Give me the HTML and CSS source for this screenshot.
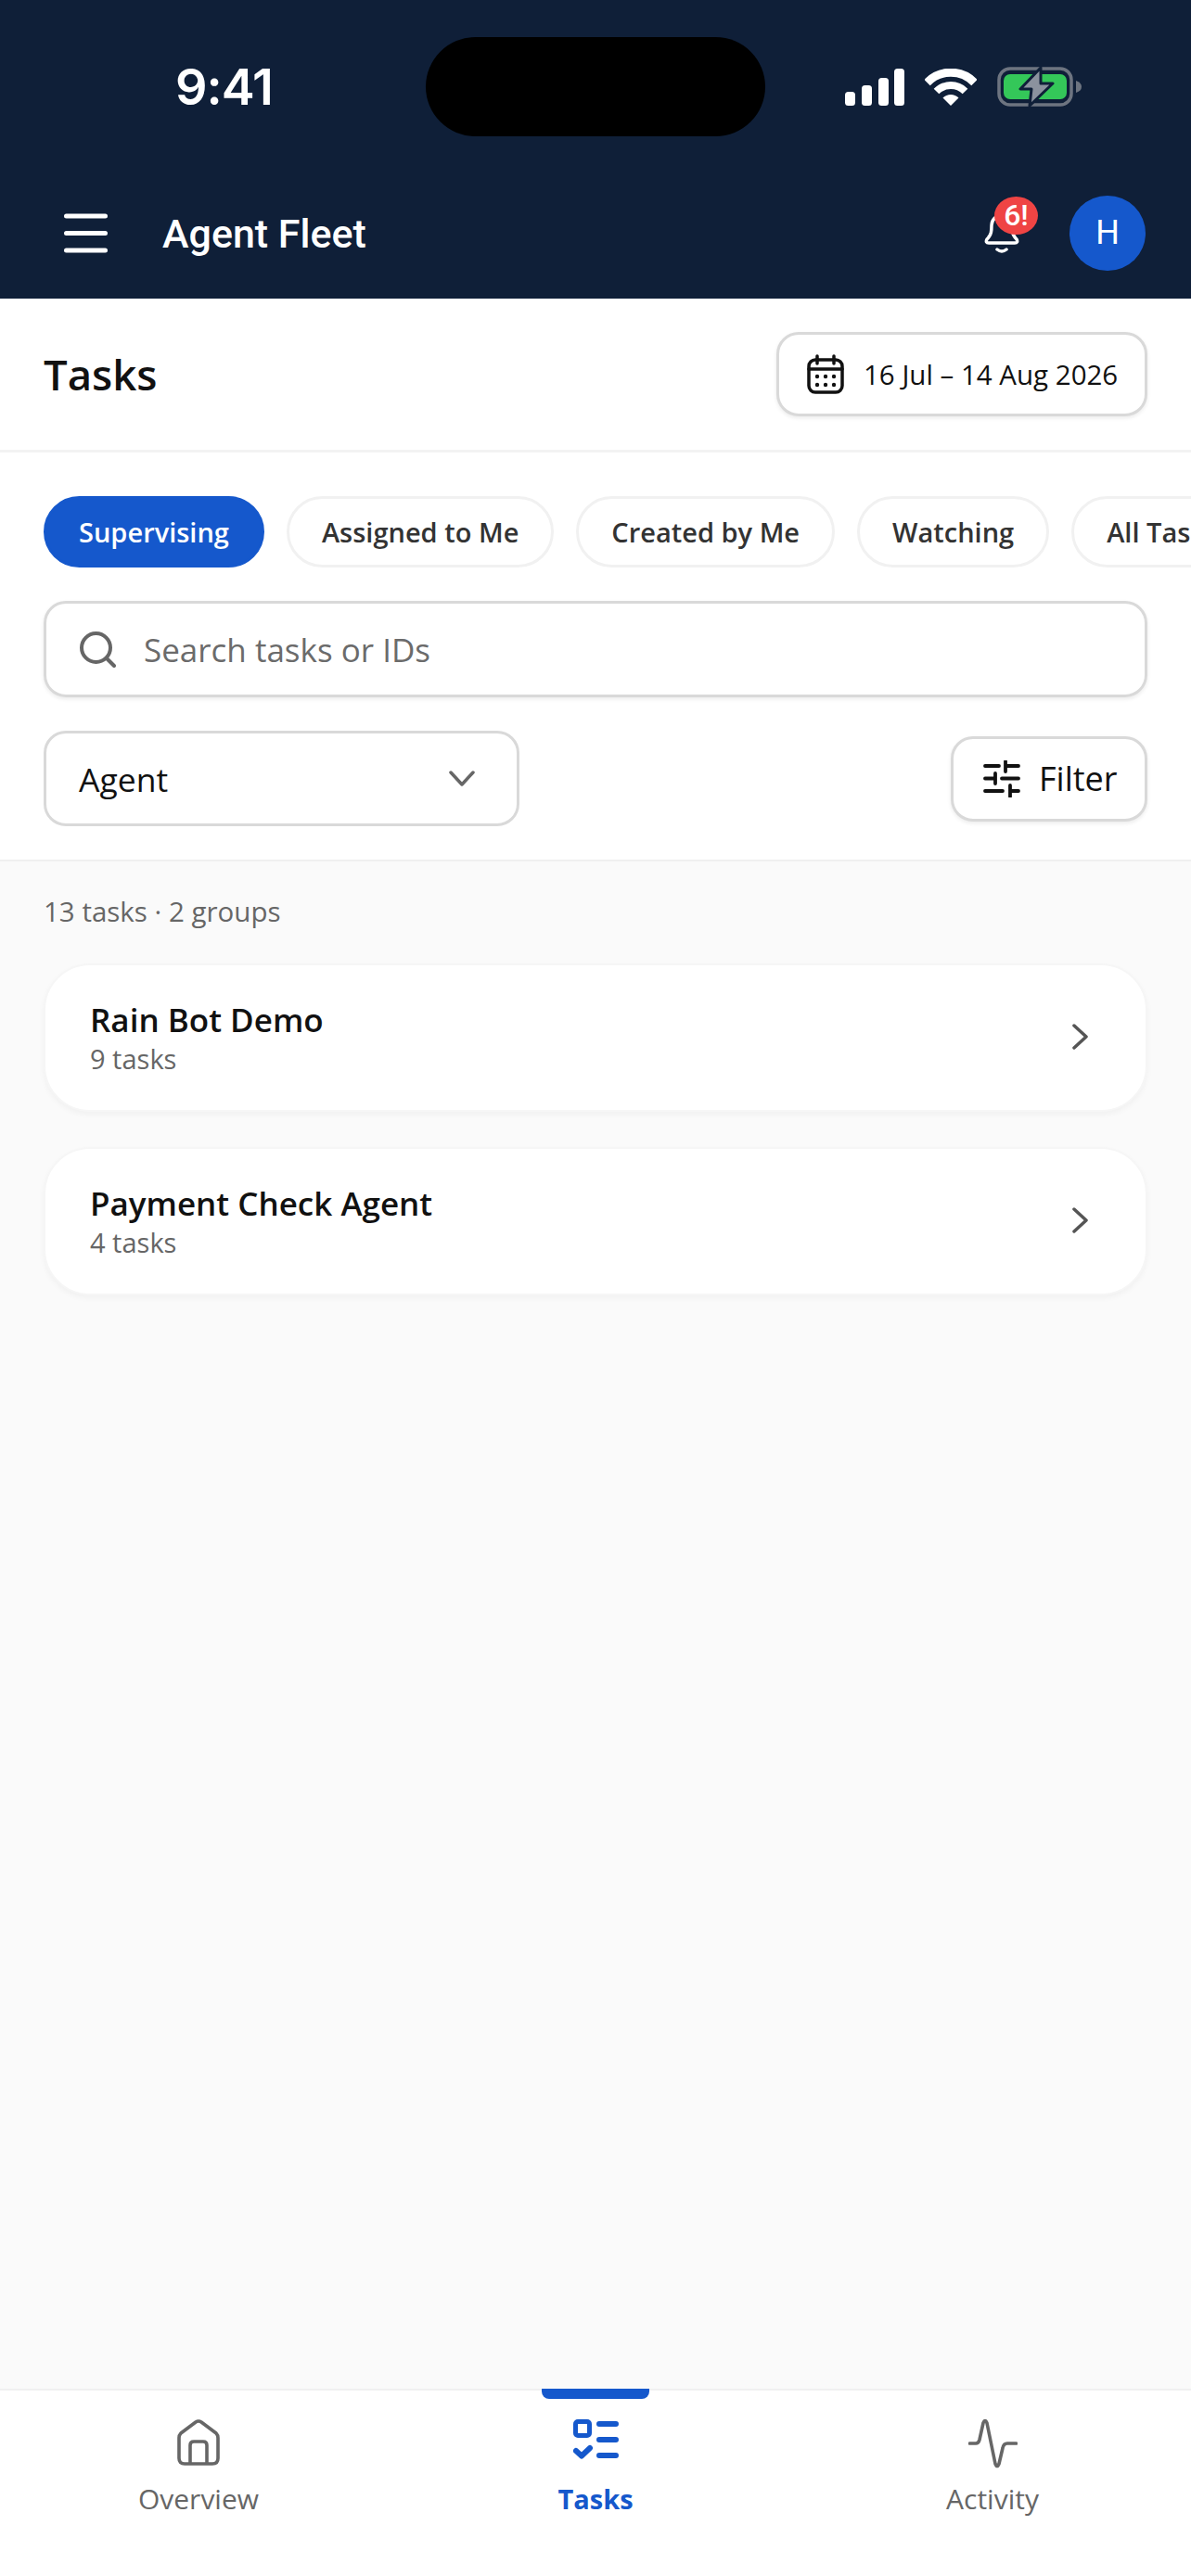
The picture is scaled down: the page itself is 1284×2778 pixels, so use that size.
FILE: index.html
```html
<!DOCTYPE html>
<html lang="en">
<head>
  <meta charset="UTF-8">
  <meta name="viewport" content="width=device-width, initial-scale=1.0">
  <title>Agent Fleet - Tasks</title>
  <link rel="stylesheet" href="styles.css">
</head>
<body>

  <header class="top-header">
    <div class="status-bar">
      <div class="status-time">9:41</div>
      <div class="island"></div>
      <div class="status-icons">
        <svg class="ic-signal" viewBox="0 0 64 40">
          <rect x="0" y="25" width="11" height="15" rx="3.5"/>
          <rect x="18" y="18" width="11" height="22" rx="3.5"/>
          <rect x="36" y="10" width="11" height="30" rx="3.5"/>
          <rect x="53" y="0" width="11" height="40" rx="3.5"/>
        </svg>
        <svg class="ic-wifi" viewBox="0 0 56 40">
          <path d="M2.5 15A35.5 35.5 0 0 1 53.5 15" fill="none" stroke="#fff" stroke-width="9"/>
          <path d="M12.5 24.5A22 22 0 0 1 43.5 24.5" fill="none" stroke="#fff" stroke-width="8"/>
          <path d="M28 40L19.5 31.5A12 12 0 0 1 36.5 31.5Z" fill="#fff"/>
        </svg>
        <svg class="ic-battery" viewBox="0 0 91 43">
          <rect x="2" y="2" width="78" height="39" rx="12" fill="none" stroke="#6d7480" stroke-width="3.5"/>
          <rect x="7" y="8" width="68" height="27" rx="7" fill="#34c759"/>
          <path d="M85 15Q91 17 91 21.5Q91 26 85 28Z" fill="#6d7480"/>
          <path d="M47 1L25 24H37L35 42L60 18H47Z" fill="#8b929e" stroke="#0f1f38" stroke-width="3" stroke-linejoin="round"/>
        </svg>
      </div>
    </div>

    <div class="app-bar">
      <svg class="ic-menu" viewBox="0 0 47 43" fill="none" stroke="#fff" stroke-width="5" stroke-linecap="round">
        <path d="M2.5 3H44.5M2.5 21.5H44.5M2.5 40H44.5"/>
      </svg>
      <div class="app-title">Agent Fleet</div>
      <div class="bell">
        <svg class="ic-bell" viewBox="0 0 40 44" fill="none" stroke="#fff" stroke-width="3.5" stroke-linecap="round" stroke-linejoin="round">
          <path d="M4 27C9 22 9 18 9 12A11 11 0 0 1 31 12C31 18 31 22 36 27Q38 31 34 31H6Q2 31 4 27Z"/>
          <path d="M15 38Q20 42 25 38"/>
        </svg>
        <span class="badge">6!</span>
      </div>
      <div class="avatar">H</div>
    </div>
  </header>

  <section class="title-row">
    <h1>Tasks</h1>
    <button class="date-btn">
      <svg class="ic-calendar" viewBox="0 0 40 43" fill="none" stroke="#111" stroke-width="3.5" stroke-linecap="round">
        <rect x="2" y="6" width="36" height="35" rx="7"/>
        <path d="M2 16H38M11 2V10M29 2V10"/>
        <g fill="#111" stroke="none">
          <circle cx="11" cy="24" r="2.2"/><circle cx="20" cy="24" r="2.2"/><circle cx="29" cy="24" r="2.2"/>
          <circle cx="11" cy="33" r="2.2"/><circle cx="20" cy="33" r="2.2"/><circle cx="29" cy="33" r="2.2"/>
        </g>
      </svg>
      16 Jul – 14 Aug 2026
    </button>
  </section>

  <section class="controls">
    <div class="pills">
      <div class="pill active">Supervising</div>
      <div class="pill">Assigned to Me</div>
      <div class="pill">Created by Me</div>
      <div class="pill">Watching</div>
      <div class="pill">All Tasks</div>
    </div>

    <div class="search-box">
      <svg class="ic-search" viewBox="0 0 39 39" fill="none" stroke="#666" stroke-width="4" stroke-linecap="round">
        <circle cx="17.5" cy="17.5" r="15.5"/>
        <path d="M29 29L37 37"/>
      </svg>
      <span>Search tasks or IDs</span>
    </div>

    <div class="filter-row">
      <div class="agent-select">
        <span>Agent</span>
        <svg class="ic-down" viewBox="0 0 28 17" fill="none" stroke="#666" stroke-width="3.5" stroke-linecap="round" stroke-linejoin="round">
          <path d="M2 2L14 15L26 2"/>
        </svg>
      </div>
      <button class="filter-btn">
        <svg class="ic-filter" viewBox="0 0 40 40" fill="none" stroke="#111" stroke-width="3.8" stroke-linecap="round">
          <path d="M2 6H17M24 1V12M24 6H38M2 19.5H12M13 14V25M20 19.5H38M2 33H21M29 27V39M29 33H38"/>
        </svg>
        Filter
      </button>
    </div>
  </section>

  <main class="content">
    <div class="summary">13 tasks · 2 groups</div>

    <div class="group-card">
      <div>
        <div class="group-name">Rain Bot Demo</div>
        <div class="group-count">9 tasks</div>
      </div>
      <svg class="ic-right" viewBox="0 0 19 28" fill="none" stroke="#555" stroke-width="3.5" stroke-linecap="round" stroke-linejoin="round">
        <path d="M3 2L16 14L3 26"/>
      </svg>
    </div>

    <div class="group-card">
      <div>
        <div class="group-name">Payment Check Agent</div>
        <div class="group-count">4 tasks</div>
      </div>
      <svg class="ic-right" viewBox="0 0 19 28" fill="none" stroke="#555" stroke-width="3.5" stroke-linecap="round" stroke-linejoin="round">
        <path d="M3 2L16 14L3 26"/>
      </svg>
    </div>
  </main>

  <nav class="bottom-nav">
    <div class="nav-item">
      <svg class="ic-home" viewBox="0 0 48 50" fill="none" stroke="#666" stroke-width="3.6" stroke-linejoin="round">
        <path d="M3 20Q3 17 5 15L21 3Q24 1 27 3L43 15Q45 17 45 20V42Q45 48 39 48H9Q3 48 3 42Z"/>
        <path d="M15 48V28Q15 24 19 24H29Q33 24 33 28V48"/>
      </svg>
      <span>Overview</span>
    </div>
    <div class="nav-item active">
      <svg class="ic-tasks" viewBox="0 0 49 44" fill="none" stroke="#1558cc" stroke-linecap="round" stroke-linejoin="round">
        <rect x="2.5" y="2.5" width="15" height="15" rx="2.5" stroke-width="5"/>
        <path d="M28 5H46M28 22H46M28 39H46" stroke-width="6"/>
        <path d="M3 34L9 39.5L18 31" stroke-width="6"/>
      </svg>
      <span>Tasks</span>
    </div>
    <div class="nav-item">
      <svg class="ic-activity" viewBox="0 0 53 53" fill="none" stroke="#666" stroke-width="3.6" stroke-linecap="round" stroke-linejoin="round">
        <path d="M1.5 26H8Q11 26 12 22L16 4Q18 -1 20 4L29 48Q31 53 33 48L37 31Q38 26 42 26H51.5"/>
      </svg>
      <span>Activity</span>
    </div>
  </nav>

</body>
</html>
```

FILE: styles.css
```css
* {
  box-sizing: border-box;
}

body {
  margin: 0;
  width: 1284px;
  height: 2778px;
  display: flex;
  flex-direction: column;
  overflow: hidden;
  font-family: 'Open Sans', sans-serif;
  color: #111;
  background-color: #fff;
}

button {
  font-family: inherit;
  color: inherit;
  background-color: #fff;
}

svg {
  display: block;
  flex-shrink: 0;
}

/* Header */
.top-header {
  height: 322px;
  background-color: #0f1f38;
  color: #fff;
  font-family: Roboto, sans-serif;
}

.status-bar {
  display: grid;
  grid-template-columns: 459px 366px 1fr;
  padding-top: 40px;
  height: 147px;
}

.status-time {
  padding-left: 189px;
  font-family: Inter, sans-serif;
  font-size: 54px;
  font-weight: 600;
  line-height: 107px;
  letter-spacing: -1px;
}

.island {
  background-color: #000;
  border-radius: 54px;
}

.status-icons {
  display: flex;
  align-items: center;
  gap: 22px;
  padding-left: 86px;
  fill: #fff;
}

.ic-signal {
  width: 64px;
  height: 40px;
}

.ic-wifi {
  width: 56px;
  height: 40px;
}

.ic-battery {
  width: 91px;
  height: 43px;
}

.app-bar {
  display: flex;
  align-items: center;
  height: 81px;
  margin-top: 64px;
  padding: 0 49px 0 69px;
}

.ic-menu {
  width: 47px;
  height: 43px;
}

.app-title {
  margin-left: 59px;
  font-size: 43px;
  font-weight: 500;
  flex: 1;
}

.bell {
  position: relative;
  width: 40px;
  height: 44px;
  margin-top: 2px;
  margin-right: 53px;
}

.ic-bell {
  width: 40px;
  height: 44px;
}

.badge {
  position: absolute;
  top: -19px;
  left: 12px;
  width: 47px;
  height: 41px;
  border-radius: 50%;
  background-color: #ef4444;
  font-size: 32px;
  line-height: 41px;
  text-align: center;
  font-weight: 500;
}

.avatar {
  width: 82px;
  height: 81px;
  border-radius: 50%;
  background-color: #1558cc;
  font-size: 36px;
  line-height: 81px;
  text-align: center;
}

/* Title row */
.title-row {
  display: flex;
  align-items: center;
  justify-content: space-between;
  height: 166px;
  padding: 0 47px;
  border-bottom: 3px solid #f3f3f3;
}

h1 {
  margin: 0 0 2px;
  font-size: 45.5px;
  font-weight: 600;
}

.date-btn {
  display: flex;
  align-items: center;
  gap: 21px;
  width: 400px;
  height: 91px;
  padding: 0 0 0 30px;
  border: 3px solid #d9d9d9;
  border-radius: 24px;
  box-shadow: 0 2px 4px rgba(0, 0, 0, 0.08);
  font-size: 29.5px;
}

.ic-calendar {
  width: 40px;
  height: 43px;
}

/* Pills, search, filters */
.controls {
  display: flex;
  flex-direction: column;
  gap: 36px;
  padding: 47px 47px 36px;
  border-bottom: 2px solid #f0f0f0;
}

.pills {
  display: flex;
  gap: 24px;
  width: 1237px;
  overflow: hidden;
}

.pill {
  flex-shrink: 0;
  height: 77px;
  padding: 0 35px;
  border: 3px solid #f1f1f1;
  border-radius: 39px;
  font-size: 29px;
  font-weight: 600;
  line-height: 71px;
  color: #333;
}

.pill.active {
  background-color: #1558cc;
  border-color: #1558cc;
  color: #fff;
}

.search-box {
  display: flex;
  align-items: center;
  gap: 30px;
  height: 104px;
  padding-left: 36px;
  border: 3px solid #d9d9d9;
  border-radius: 24px;
  box-shadow: 0 2px 4px rgba(0, 0, 0, 0.08);
  font-size: 35px;
  color: #6b6b6b;
}

.ic-search {
  width: 39px;
  height: 39px;
}

.filter-row {
  display: flex;
  align-items: center;
  justify-content: space-between;
}

.agent-select {
  display: flex;
  align-items: center;
  justify-content: space-between;
  width: 513px;
  height: 103px;
  padding: 0 45px 0 35px;
  border: 3px solid #d9d9d9;
  border-radius: 24px;
  font-size: 35.5px;
}

.ic-down {
  width: 28px;
  height: 17px;
}

.filter-btn {
  display: flex;
  align-items: center;
  gap: 20px;
  width: 212px;
  height: 92px;
  padding: 0 0 0 32px;
  border: 3px solid #d9d9d9;
  border-radius: 24px;
  box-shadow: 0 2px 4px rgba(0, 0, 0, 0.08);
  font-size: 36px;
}

.ic-filter {
  width: 40px;
  height: 40px;
}

/* Group list */
.content {
  flex: 1;
  padding: 0 47px;
  background-color: #fafafa;
}

.summary {
  height: 110px;
  padding-top: 33px;
  font-size: 29.5px;
  line-height: 42px;
  color: #666;
}

.group-card {
  display: flex;
  align-items: center;
  justify-content: space-between;
  height: 160px;
  margin-bottom: 38px;
  padding: 2px 61px 0 48px;
  background-color: #fff;
  border: 2px solid #f6f6f6;
  border-radius: 50px;
  box-shadow: 0 3px 6px rgba(0, 0, 0, 0.04);
}

.group-name {
  font-size: 35px;
  font-weight: 600;
  line-height: 44px;
}

.group-count {
  font-size: 29px;
  line-height: 40px;
  color: #666;
}

.ic-right {
  width: 19px;
  height: 28px;
  margin-top: -4px;
}

/* Bottom nav */
.bottom-nav {
  display: grid;
  grid-template-columns: repeat(3, 1fr);
  height: 202px;
  background-color: #fff;
  border-top: 2px solid #f0f0f0;
}

.nav-item {
  position: relative;
  display: flex;
  flex-direction: column;
  align-items: center;
  font-size: 30px;
  color: #666;
}

.nav-item svg {
  position: relative;
  margin-top: 31px;
}

.nav-item span {
  position: absolute;
  top: 96px;
  line-height: 42px;
}

.nav-item.active {
  color: #1558cc;
  font-size: 29px;
  font-weight: 700;
}

.nav-item.active::before {
  content: '';
  position: absolute;
  top: -2px;
  width: 116px;
  height: 11px;
  background-color: #1558cc;
  border-radius: 0 0 8px 8px;
}

.ic-home {
  width: 48px;
  height: 50px;
}

.ic-tasks {
  width: 49px;
  height: 44px;
}

.ic-activity {
  width: 53px;
  height: 53px;
}
```
